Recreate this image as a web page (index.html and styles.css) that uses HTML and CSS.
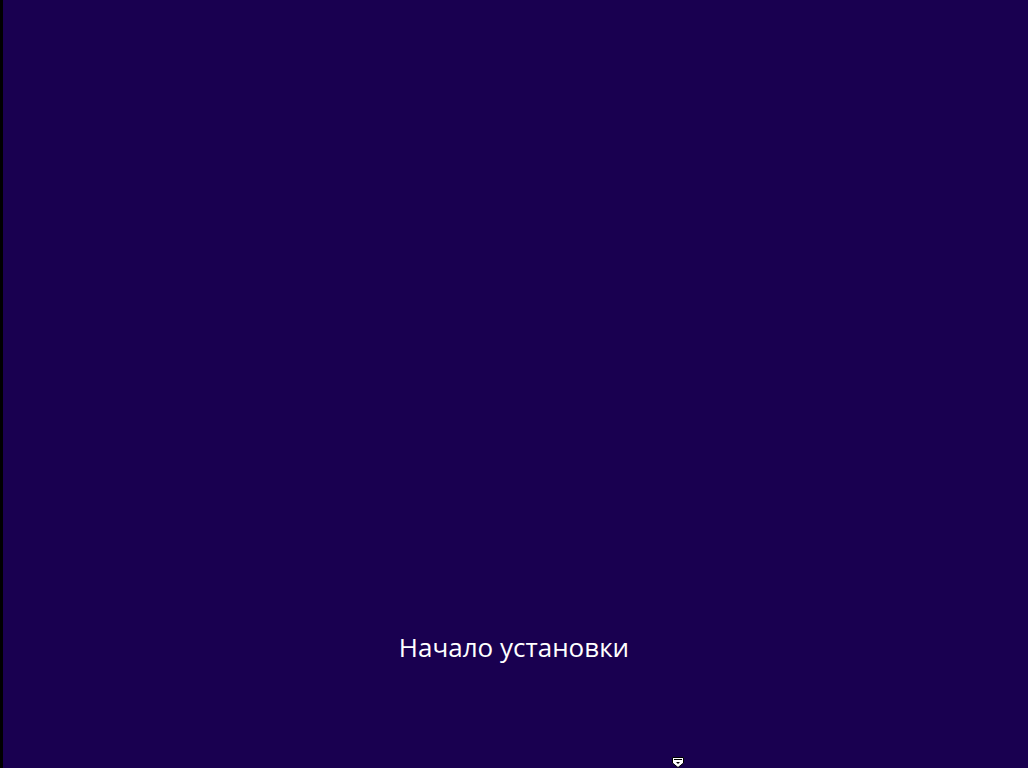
FILE: index.html
```html
<!DOCTYPE html>
<html lang="ru">
<head>
<meta charset="utf-8">
<link rel="stylesheet" href="styles.css">
</head>
<body>
<div class="screen">
  <div class="edge"></div>
  <main class="setup">
    <div class="status">Начало установки</div>
  </main>
  <svg class="cursor" width="13" height="11" viewBox="0 0 13 11">
    <path d="M0.5 0.5 H11.5 V6 L6 10.5 L0.5 6 Z" fill="#fff" stroke="#000" stroke-width="1"/>
    <rect x="2" y="2" width="8" height="1" fill="#000"/>
    <path d="M4 5 H8 L6 7 Z" fill="#000"/>
  </svg>
</div>
</body>
</html>
```
FILE: styles.css
```css
html, body {
  margin: 0;
  padding: 0;
  width: 100%;
  height: 100%;
  overflow: hidden;
}
.screen {
  position: relative;
  display: flex;
  width: 1028px;
  height: 768px;
  background: #190050;
}
.edge {
  width: 3px;
  background: #000;
  flex: none;
}
.setup {
  flex: 1;
  display: flex;
  flex-direction: column;
  justify-content: flex-end;
  align-items: center;
  padding-bottom: 105px;
  margin-left: -3px;
}
.status {
  font-family: "Open Sans", "Noto Sans", sans-serif;
  font-size: 26px;
  line-height: 32px;
  color: #fff;
}
.cursor {
  position: absolute;
  left: 672px;
  top: 757px;
}
```
